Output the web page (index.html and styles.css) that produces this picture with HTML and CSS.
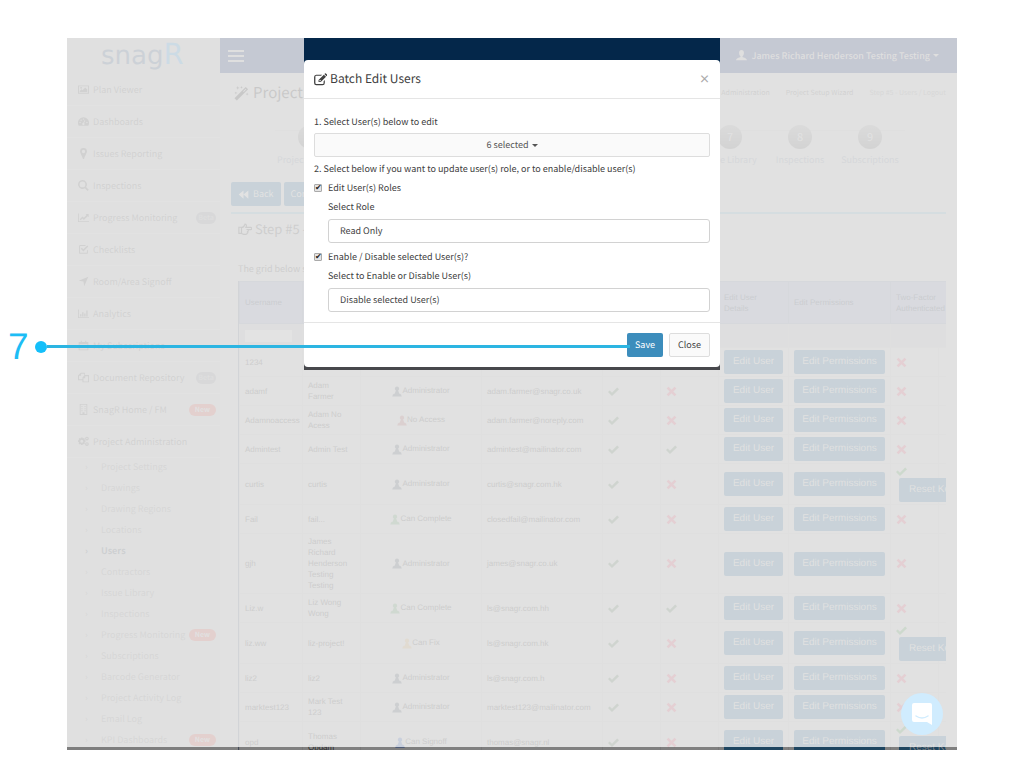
FILE: index.html
```html
<!DOCTYPE html>
<html lang="en">
<head>
    <meta charset="UTF-8">
    <meta name="viewport" content="width=device-width, initial-scale=1.0">
    <title>snagR - Batch Edit Users</title>
    <link rel="stylesheet" href="styles.css">
</head>
<body>

    <!-- Icon set -->
    <svg class="icon-defs" aria-hidden="true">
        <symbol id="i-image" viewBox="0 0 16 16"><path fill-rule="evenodd" d="M0 2h16v12H0zM1.300 3.300v9.400h13.400V3.300z"/><path d="M2.500 11.500V10l2.500-2.500 1.500 1.500 4-4 3 3v3.500z"/><circle cx="4.500" cy="5.500" r="1.300"/></symbol>
        <symbol id="i-dash" viewBox="0 0 16 16"><path fill-rule="evenodd" d="M8 2a8 8 0 0 1 7 12H1A8 8 0 0 1 8 2zM3 8.500a1 1 0 1 0 0 2 1 1 0 0 0 0-2zM4.500 5a1 1 0 1 0 0 2 1 1 0 0 0 0-2zM8 3.500a1 1 0 1 0 0 2 1 1 0 0 0 0-2zM13 8.500a1 1 0 1 0 0 2 1 1 0 0 0 0-2zM9.500 6L7.500 10a1.600 1.600 0 1 0 1.300.3L10.500 6.500z"/></symbol>
        <symbol id="i-pin" viewBox="0 0 16 16"><path fill-rule="evenodd" d="M8 0a5 5 0 0 1 5 5c0 2.500-2 4-4 10.300a1 1 0 0 1-2 0C5 9 3 7.500 3 5a5 5 0 0 1 5-5zm0 2.700a2.400 2.400 0 1 0 0 4.800 2.400 2.400 0 0 0 0-4.800z"/></symbol>
        <symbol id="i-search" viewBox="0 0 16 16"><path fill-rule="evenodd" d="M6.500 0a6.500 6.500 0 0 1 5.300 10.200l3.900 3.900-1.800 1.800L10.100 12A6.500 6.500 0 1 1 6.500 0zm0 2.300a4.200 4.200 0 1 0 0 8.400 4.200 4.200 0 0 0 0-8.400z"/></symbol>
        <symbol id="i-line" viewBox="0 0 16 16"><path d="M0 2h1.200v11.300H16V14.500H0zM2.500 10.500l4-4 2 2L12.500 4.500 11 3h4.500v4.500L14 6l-5.500 5.500-2-2-2.800 2.500z"/></symbol>
        <symbol id="i-check-sq" viewBox="0 0 16 16"><path d="M2.500 1.500h9l-1.200 1.300H3v10h10V9.500l1.300-1.300V13a1.300 1.300 0 0 1-1.300 1.300H3A1.400 1.400 0 0 1 1.600 13V3z"/><path d="M4 7l1.500-1.500 2.300 2.300L13.500 2 15 3.500l-7.200 7.300z"/></symbol>
        <symbol id="i-arrow" viewBox="0 0 16 16"><path d="M15 1L9 15 8 8 1 7z"/></symbol>
        <symbol id="i-bars" viewBox="0 0 16 16"><path d="M0 2h1.200v11.300H16V14.500H0zM3 9h2v3.500H3zM6 6h2v6.500H6zM9 8h2v4.500H9zM12 3.500h2v9h-2z"/></symbol>
        <symbol id="i-calendar" viewBox="0 0 16 16"><path fill-rule="evenodd" d="M1 3h14v12H1zM2.300 6v7.700h11.400V6z"/><path d="M4 1h1.500v3H4zM10.500 1H12v3h-1.500z"/></symbol>
        <symbol id="i-copy" viewBox="0 0 16 16"><path fill-rule="evenodd" d="M4 1h6v3.500h6V15H6.500v-3H0V5zM4.500 2.500v3H1.500v5H6.500V8L9 5V2.500zM10.500 6v3H8v4.700h6.700V6z"/></symbol>
        <symbol id="i-building" viewBox="0 0 16 16"><path fill-rule="evenodd" d="M2.500 0h11v16h-11zM3.800 1.200v13.500h2.700V12h3v2.700h2.700V1.200z"/><path d="M5 3h1.500v1.500H5zM9.500 3H11v1.500H9.500zM5 6h1.500v1.500H5zM9.500 6H11v1.500H9.500zM5 9h1.500v1.500H5zM9.500 9H11v1.500H9.500z"/></symbol>
        <symbol id="i-cogs" viewBox="0 0 16 16"><path fill-rule="evenodd" d="M4.300 2h2.400l.4 1.600 1.500-.8 1.500 1.500-.8 1.500 1.600.5v2.400l-1.600.5.8 1.500-1.500 1.500-1.500-.8-.4 1.600H4.300l-.4-1.600-1.500.8L.9 10.700l.8-1.500L.1 8.700V6.300l1.600-.5L.9 4.300l1.500-1.500 1.500.8zM5.500 5.300a2.200 2.200 0 1 0 0 4.400 2.200 2.200 0 0 0 0-4.400z"/><path fill-rule="evenodd" d="M13 1a2.700 2.700 0 1 1 0 5.400A2.700 2.700 0 0 1 13 1zm0 1.700a1 1 0 1 0 0 2 1 1 0 0 0 0-2zM13 9a2.700 2.700 0 1 1 0 5.400A2.700 2.700 0 0 1 13 9zm0 1.700a1 1 0 1 0 0 2 1 1 0 0 0 0-2z"/></symbol>
        <symbol id="i-wand" viewBox="0 0 16 16"><path fill-rule="evenodd" d="M12.500 1l2.500 2.500L3 15.500.5 13zM12.500 2.800L9.700 5.600l.7.700 2.800-2.800z"/><path d="M4 0l.5 1.500L6 2l-1.500.5L4 4l-.5-1.500L2 2l1.500-.5zM8 0l.4 1 1 .4-1 .4L8 3l-.4-1.200-1-.4 1-.4zM14 7l.4 1.200 1.200.4-1.200.4L14 10.200 13.600 9l-1.200-.4 1.200-.4zM2 6l.4 1 1 .4-1 .4L2 9l-.4-1.200-1-.4 1-.4z"/></symbol>
        <symbol id="i-hand" viewBox="0 0 16 16"><path fill="none" stroke="currentColor" stroke-width="1.300" d="M1 6h3v7H1zM4 6.500c2 0 3-1.500 4-4 2 0 2 2 1 3.700h5.500a1.200 1.200 0 0 1 0 2.500H11c1.300.8 1 1.800 0 2.200.6.800.3 1.600-.7 2 .1.800-.5 1.300-1.500 1.300H7c-1.200 0-2-1-3-1"/></symbol>
        <symbol id="i-back" viewBox="0 0 16 16"><path d="M8 2v12L1 8zM15 2v12L8 8z"/></symbol>
        <symbol id="i-user" viewBox="0 0 16 16"><path d="M8 0c2.300 0 3.600 1.700 3.600 4S10.500 8.500 9.500 9v1.200c2 1 6 1.500 6.500 4.800H0c.5-3.300 4.500-3.800 6.500-4.800V9C5.500 8.500 4.400 6.300 4.400 4S5.700 0 8 0z"/></symbol>
        <symbol id="i-role" viewBox="0 0 16 16"><path d="M8 0a3.400 3.400 0 0 1 1.800 6.300L11.500 11q4 1 4 5H.5q0-4 4-5L6.200 6.300A3.400 3.400 0 0 1 8 0z"/></symbol>
        <symbol id="i-tick" viewBox="0 0 16 16"><path d="M0 8.800l2.400-2.400 3.400 3.300 7.600-7.500L16 4.600 5.800 14.400z"/></symbol>
        <symbol id="i-cross" viewBox="0 0 16 16"><path d="M3.500 1L8 5.400 12.500 1 15 3.500 10.600 8l4.400 4.500-2.500 2.500L8 10.600 3.500 15 1 12.500 5.400 8 1 3.500z"/></symbol>
        <symbol id="i-edit" viewBox="0 0 16 16"><path d="M2.700 2h7.500L8.600 3.500H3a1.200 1.200 0 0 0-1.300 1.300v7.500A1.200 1.200 0 0 0 3 13.500h7.500a1.200 1.200 0 0 0 1.300-1.300V10l1.500-1.500v3.700A2.800 2.800 0 0 1 10.500 15H2.900A2.800 2.800 0 0 1 .1 12.200V4.800A2.800 2.800 0 0 1 2.700 2z"/><path fill-rule="evenodd" d="M12.100 2l2.700 2.700-6.500 6.500H5.600V8.500zM6.700 8.900v1.200h1.200l.7-.7-1.200-1.200z"/><path d="M12.800 1.300l.8-.8q.6-.5 1.100 0L16.200 2q.4.600 0 1.100l-.8.800z"/></symbol>
    </svg>

    <div class="frame">
        <header class="topbar">
            <div class="logo">snag<span class="logo-r">R</span></div>
            <div class="nav">
                <button class="burger" aria-label="Toggle menu"><span></span><span></span><span></span></button>
                <a class="account" href="#"><svg class="icon"><use href="#i-user"/></svg>James Richard Henderson Testing Testing<span class="caret"></span></a>
            </div>
        </header>

        <div class="layout">
            <nav class="sidebar">
                <ul class="menu" id="menu"></ul>
                <ul class="submenu" id="submenu"></ul>
            </nav>

            <main class="content">
                <div class="title-row">
                    <h1><svg class="icon"><use href="#i-wand"/></svg>Project Setup</h1>
                    <div class="breadcrumb"><a href="#">Project Administration</a><a href="#">Project Setup Wizard</a><span>Step #5 - Users / Logout</span></div>
                </div>
                <ol class="steps" id="steps"></ol>
                <div class="actions">
                    <button class="btn-page"><svg class="icon"><use href="#i-back"/></svg>Back</button>
                    <button class="btn-page">Continue</button>
                </div>
                <section class="box">
                    <h2><svg class="icon"><use href="#i-hand"/></svg>Step #5 - Users</h2>
                    <p>The grid below shows all users</p>
                    <div class="grid">
                        <table>
                            <colgroup>
                                <col class="c-user"><col class="c-name"><col class="c-role"><col class="c-mail"><col class="c-flag"><col class="c-flag"><col class="c-edit"><col class="c-perm"><col class="c-two"><col class="c-end">
                            </colgroup>
                            <thead>
                                <tr>
                                    <th>Username</th><th>Name</th><th>Role</th><th>Email</th><th>Enabled</th><th>Locked</th>
                                    <th>Edit User Details</th><th>Edit Permissions</th><th colspan="2">Two-Factor Authenticated</th>
                                </tr>
                                <tr class="filter">
                                    <td><input type="text" aria-label="Filter by username"></td>
                                    <td></td><td></td><td></td><td></td><td></td><td></td><td></td><td colspan="2"></td>
                                </tr>
                            </thead>
                            <tbody id="userList"></tbody>
                        </table>
                    </div>
                </section>
            </main>
        </div>

        <button class="chat" aria-label="Open chat">
            <svg viewBox="0 0 20 22"><path fill="#fff" d="M2 0h16a2 2 0 0 1 2 2v20l-5-3H2a2 2 0 0 1-2-2V2a2 2 0 0 1 2-2z"/><path fill="none" stroke="#3aaffa" stroke-width="1.500" stroke-linecap="round" d="M4 13q6 4 12 0"/></svg>
        </button>
        <div class="veil"></div>

        <!-- Batch edit dialog -->
        <div class="modal-area">
            <div class="modal-back">
                <form class="modal" role="dialog" aria-labelledby="modalTitle" onsubmit="return false">
                    <div class="modal-header">
                        <h3 id="modalTitle"><svg class="icon"><use href="#i-edit"/></svg>Batch Edit Users</h3>
                        <button type="button" class="close" aria-label="Close dialog">×</button>
                    </div>
                    <div class="modal-body">
                        <div class="line">1. Select User(s) below to edit</div>
                        <button type="button" class="picker">6 selected<span class="caret"></span></button>
                        <div class="line">2. Select below if you want to update user(s) role, or to enable/disable user(s)</div>
                        <label class="check"><input type="checkbox" checked>Edit User(s) Roles</label>
                        <div class="field">
                            <label for="role">Select Role</label>
                            <select id="role"><option>Read Only</option></select>
                        </div>
                        <label class="check second"><input type="checkbox" checked>Enable / Disable selected User(s)?</label>
                        <div class="field">
                            <label for="state">Select to Enable or Disable User(s)</label>
                            <select id="state"><option>Disable selected User(s)</option></select>
                        </div>
                    </div>
                    <div class="modal-footer">
                        <button class="save">Save</button>
                        <button type="button" class="cancel">Close</button>
                    </div>
                </form>
            </div>
        </div>
    </div>

    <!-- Step callout -->
    <div class="callout"><span class="callout-number">7</span><span class="callout-dot"></span><span class="callout-line"></span></div>

    <script>
        const menu = [
            ['image', 'Plan Viewer'], ['dash', 'Dashboards'], ['pin', 'Issues Reporting'],
            ['search', 'Inspections'], ['line', 'Progress Monitoring', 'beta'], ['check-sq', 'Checklists'],
            ['arrow', 'Room/Area Signoff'], ['bars', 'Analytics'], ['calendar', 'My Subscriptions'],
            ['copy', 'Document Repository', 'beta'], ['building', 'SnagR Home / FM', 'new'], ['cogs', 'Project Administration']
        ];
        const submenu = [
            ['Project Settings'], ['Drawings'], ['Drawing Regions'], ['Locations'], ['Users'], ['Contractors'],
            ['Issue Library'], ['Inspections'], ['Progress Monitoring', 'new'], ['Subscriptions'],
            ['Barcode Generator'], ['Project Activity Log'], ['Email Log'], ['KPI Dashboards', 'new']
        ];
        const steps = ['Project Settings', 'Drawings', 'Locations', 'Contractors', 'Users', 'Regions', 'Issue Library', 'Inspections', 'Subscriptions'];

        // username, name, role, email, enabled, locked, two-factor
        const users = [
            ['1234', '1234', 'Administrator', '1234@snagr.co.uk', 1, 0, 0],
            ['adamf', 'Adam Farmer', 'Administrator', 'adam.farmer@snagr.co.uk', 1, 0, 0],
            ['Adamnoaccess', 'Adam No Acess', 'No Access', 'adam.farmer@noreply.com', 1, 0, 0],
            ['Admintest', 'Admin Test', 'Administrator', 'admintest@mailinator.com', 1, 1, 0],
            ['curtis', 'curtis', 'Administrator', 'curtis@snagr.com.hk', 1, 0, 1],
            ['Fail', 'fail...', 'Can Complete', 'closedfail@mailinator.com', 1, 0, 0],
            ['gjh', 'James Richard Henderson Testing Testing', 'Administrator', 'james@snagr.co.uk', 1, 0, 0],
            ['Liz.w', 'Liz Wong Wong', 'Can Complete', 'ls@snagr.com.hh', 1, 1, 0],
            ['liz.ww', 'liz-project!', 'Can Fix', 'ls@snagr.com.hk', 1, 0, 1],
            ['liz2', 'liz2', 'Administrator', 'ls@snagr.com.h', 1, 0, 0],
            ['marktest123', 'Mark Test 123', 'Administrator', 'marktest123@mailinator.com', 1, 0, 0],
            ['opd', 'Thomas Opdam', 'Can Signoff', 'thomas@snagr.nl', 1, 0, 1]
        ];

        const icon = (name, cls = '') => `<svg class="icon ${cls}"><use href="#i-${name}"/></svg>`;
        const badge = type => type ? `<span class="badge ${type}">${type === 'new' ? 'New' : 'Beta'}</span>` : '';
        const flag = on => on ? icon('tick', 'yes') : icon('cross', 'no');

        document.getElementById('menu').innerHTML = menu.map(m =>
            `<li><a href="#">${icon(m[0])}${m[1]}</a>${badge(m[2])}</li>`).join('');
        document.getElementById('submenu').innerHTML = submenu.map(m =>
            `<li class="${m[0] === 'Users' ? 'active' : ''}"><a href="#">${m[0]}</a>${badge(m[1])}</li>`).join('');
        document.getElementById('steps').innerHTML = steps.map((s, i) =>
            `<li><span class="step-number">${i + 1}</span>${s}</li>`).join('');
        document.getElementById('userList').innerHTML = users.map(u => `
            <tr>
                <td>${u[0]}</td>
                <td>${u[1]}</td>
                <td class="role">${icon('role', u[2].toLowerCase().replace(' ', '-'))}${u[2]}</td>
                <td>${u[3]}</td>
                <td>${flag(u[4])}</td>
                <td>${flag(u[5])}</td>
                <td><button class="btn-row">Edit User</button></td>
                <td><button class="btn-row">Edit Permissions</button></td>
                <td class="two">${flag(u[6])}${u[6] ? '<button class="btn-row reset">Reset Key</button>' : ''}</td>
                <td></td>
            </tr>`).join('');
    </script>

</body>
</html>
```

FILE: styles.css
```css
* {
    box-sizing: border-box;
}
body {
    margin: 0;
    background: #fff;
    font-family: "Noto Sans CJK SC", "Noto Sans", sans-serif;
    font-size: 9px;
    line-height: 16px;
    color: #1c1c1c;
    text-rendering: geometricPrecision;
}
ul, ol, h1, h2, h3, p {
    margin: 0;
    padding: 0;
    list-style: none;
    font-weight: normal;
}
a {
    color: inherit;
    text-decoration: none;
}
button, input, select {
    font: inherit;
    margin: 0;
    text-rendering: inherit;
}
button {
    border: none;
    padding: 0;
    cursor: pointer;
}
.icon-defs {
    position: absolute;
    width: 0;
    height: 0;
}
.icon {
    width: 11px;
    height: 11px;
    fill: currentColor;
    flex: none;
}
.caret {
    display: inline-block;
    margin-left: 3px;
    vertical-align: middle;
    border: 3px solid transparent;
    border-top-color: currentColor;
    border-bottom: none;
}

/* Frame */
.frame {
    position: relative;
    margin: 38px 67px 0;
    height: calc(100vh - 56px);
    overflow: hidden;
    background: #808080;
}
.veil {
    position: absolute;
    inset: 0 0 3px;
    background: rgba(255, 255, 255, 0.76);
}

/* Top bar */
.topbar {
    display: flex;
    height: 35px;
}
.logo {
    width: 153px;
    padding-left: 34px;
    background: #7c7c7c;
    font-family: "DejaVu Sans", sans-serif;
    font-size: 26px;
    line-height: 32px;
    color: #2c4058;
}
.logo-r {
    font-size: 29px;
    color: #2d6a94;
}
.nav {
    flex: 1;
    display: flex;
    align-items: center;
    justify-content: space-between;
    padding: 0 18px 0 8px;
    background: #101d48;
    color: #787878;
}
.burger {
    display: flex;
    flex-direction: column;
    gap: 3px;
    background: none;
}
.burger span {
    width: 16px;
    height: 2px;
    background: #787878;
}
.account {
    display: flex;
    align-items: center;
    font-weight: 500;
}
.account .icon {
    margin-right: 5px;
}

/* Sidebar */
.layout {
    display: flex;
}
.sidebar {
    width: 153px;
    flex: none;
    background: #7e7e7e;
    color: #404040;
    white-space: nowrap;
}
.sidebar li {
    display: flex;
    align-items: center;
    justify-content: space-between;
    padding-right: 4px;
}
.menu {
    padding-top: 1px;
}
.menu li {
    height: 32px;
    padding-left: 11px;
    border-bottom: 1px solid #868686;
}
.menu a {
    display: flex;
    align-items: center;
    gap: 4px;
}
.submenu {
    margin-top: -2px;
}
.submenu li {
    height: 21px;
    padding-left: 18px;
    color: #545454;
}
.submenu a::before {
    content: "›";
    display: inline-block;
    width: 16px;
}
.submenu .active {
    font-weight: bold;
    color: #303840;
}
.badge {
    height: 12px;
    padding: 0 6px;
    border-radius: 6px;
    font-size: 7px;
    line-height: 12px;
    font-weight: bold;
    color: #808080;
}
.badge.new {
    background: #8c3c34;
}
.badge.beta {
    padding: 0 2px;
    background: #5c5e62;
    color: #747474;
}

/* Content */
.content {
    flex: 1;
    min-width: 0;
    padding: 9px 11px 0;
}
.title-row {
    display: flex;
    align-items: center;
    justify-content: space-between;
    height: 22px;
    padding-left: 3px;
}
h1 {
    display: flex;
    align-items: center;
    gap: 4px;
    font-size: 15px;
    line-height: 22px;
}
h1 .icon {
    width: 15px;
    height: 15px;
}
.breadcrumb {
    display: flex;
    gap: 16px;
    font-size: 7px;
    color: #404040;
}
.breadcrumb span {
    color: #585858;
}
.steps {
    display: flex;
    width: 630px;
    margin: 21px 0 0 44px;
}
.steps li {
    width: 70px;
    flex: none;
    text-align: center;
    color: #505864;
    white-space: nowrap;
    background: linear-gradient(#787878, #787878) 0 5px / 100% 1px no-repeat;
}
.step-number {
    display: block;
    width: 24px;
    height: 24px;
    margin: 0 auto 3px;
    border-radius: 50%;
    background: linear-gradient(#686868, #484848);
    font-size: 11px;
    line-height: 24px;
    color: #858585;
}
.actions {
    display: flex;
    gap: 3px;
    margin-top: 14px;
}
.btn-page {
    display: flex;
    align-items: center;
    gap: 4px;
    height: 24px;
    padding: 0 7px;
    border-radius: 2px;
    background: #1e4560;
    color: #888;
}
.box {
    margin-top: 6px;
    padding: 3px 0 0 7px;
    border-top: 2px solid #52727f;
}
h2 {
    display: flex;
    align-items: center;
    gap: 3px;
    font-size: 13px;
    line-height: 24px;
    color: #303030;
}
h2 .icon {
    width: 14px;
    height: 14px;
}
.box p {
    margin: 20px 0 4px;
    color: #303030;
}

/* User grid */
.grid {
    overflow: hidden;
    border-left: 1px solid #444b58;
    font-family: "Liberation Sans", Arial, sans-serif;
    font-size: 8px;
    line-height: 11px;
}
table {
    width: 719px;
    table-layout: fixed;
    border-collapse: collapse;
}
.c-user { width: 63px; }
.c-name { width: 58px; }
.c-role { width: 121px; }
.c-mail { width: 121px; }
.c-flag { width: 58px; }
.c-edit { width: 70px; }
.c-perm { width: 102px; }
.c-two { width: 48px; }
.c-end { width: 20px; }
th, td {
    padding: 2px 5px;
    text-align: left;
    border: 1px solid #787878;
}
th {
    height: 42px;
    background: #606678;
    border-color: #565c6c;
    font-weight: normal;
    color: #202838;
}
.filter td {
    height: 24px;
    background: #74777a;
}
.filter input {
    display: block;
    width: 47px;
    height: 12px;
    border: none;
    background: #8a8a8a;
}
tbody td {
    color: #2a2a2a;
}
.role {
    text-align: center;
}
.role .icon {
    vertical-align: middle;
    width: 10px;
}
.administrator { color: #303840; }
.can-complete { color: #3a6040; }
.can-fix { color: #806840; }
.can-signoff { color: #203a70; }
.no-access { color: #6a3c3c; }
td > .icon {
    display: inline-block;
    vertical-align: middle;
}
.yes {
    color: #384c38;
}
.no {
    color: #903848;
}
.btn-row {
    display: block;
    width: 100%;
    height: 24px;
    border-radius: 2px;
    background: #1e4560;
    color: #808080;
    font-size: 10px;
    line-height: 24px;
}
.two {
    white-space: nowrap;
}
.two .icon {
    display: block;
}
.two .yes {
    color: #306030;
}
.reset {
    position: relative;
    width: 66px;
    margin: 1px 0 0 3px;
}
.chat {
    position: absolute;
    right: 14px;
    bottom: 15px;
    width: 42px;
    height: 42px;
    border-radius: 50%;
    background: #3aaffa;
}
.chat svg {
    display: block;
    width: 20px;
    height: 22px;
    margin: auto;
}

/* Dialog */
.modal-area {
    position: absolute;
    inset: 0 0 auto;
    display: flex;
    justify-content: center;
}
.modal-back {
    width: 416px;
    padding: 22px 0 3px;
    background: linear-gradient(#04274a 35px, #47484c 35px);
}
.modal {
    border-radius: 4px;
    background: #fff;
    color: #404040;
}
.modal-header {
    display: flex;
    align-items: center;
    justify-content: space-between;
    padding: 8px 10px;
    border-bottom: 1px solid #e5e5e5;
}
h3 {
    display: flex;
    align-items: center;
    gap: 3px;
    font-size: 12px;
    line-height: 22px;
}
h3 .icon {
    width: 13px;
    height: 13px;
}
.close {
    background: none;
    color: #aaa;
    font-size: 11px;
    font-weight: bold;
    line-height: 22px;
}
.modal-body {
    padding: 15px 10px 10px;
}
.picker {
    display: block;
    width: 100%;
    height: 24px;
    margin: 3px 0 4px;
    border: 1px solid #ddd;
    border-radius: 2px;
    background: #fafafa;
    color: #555;
}
.check {
    display: flex;
    align-items: center;
    gap: 6px;
    margin: 3px 0;
}
.check.second {
    margin-top: 6px;
}
.check input {
    appearance: none;
    width: 8px;
    height: 8px;
    border: 1px solid #aaa;
    border-radius: 1px;
    background: #e4e4e4;
}
.check input:checked::before {
    content: "✔";
    display: block;
    font: 8px/6px "DejaVu Sans", sans-serif;
    color: #222;
}
.field {
    padding-left: 14px;
}
.field label {
    display: block;
    margin-bottom: 4px;
}
.field select {
    display: block;
    width: 100%;
    height: 24px;
    padding: 0 11px;
    appearance: none;
    border: 1px solid #d2d2d2;
    border-radius: 3px;
    background: #fff;
    color: #444;
}
.modal-footer {
    display: flex;
    justify-content: flex-end;
    gap: 6px;
    padding: 10px;
    border-top: 1px solid #e5e5e5;
}
.save, .cancel {
    height: 24px;
    padding: 0 8px;
    border-radius: 2px;
}
.save {
    background: #3c8dbc;
    color: #fff;
}
.cancel {
    border: 1px solid #ddd;
    background: #fafafa;
    color: #444;
}

/* Callout */
.callout {
    position: absolute;
    top: 326px;
    left: 8px;
    right: calc(50% - 118px);
    display: flex;
    align-items: center;
    height: 41px;
    color: #1dbdf5;
    pointer-events: none;
}
.callout-number {
    width: 27px;
    font-family: "Liberation Sans", Arial, sans-serif;
    font-size: 37px;
    line-height: 41px;
}
.callout-dot {
    width: 12px;
    height: 12px;
    border-radius: 50%;
    background: #14bffa;
}
.callout-line {
    flex: 1;
    height: 3px;
    background: #2cb5e2;
}
```
